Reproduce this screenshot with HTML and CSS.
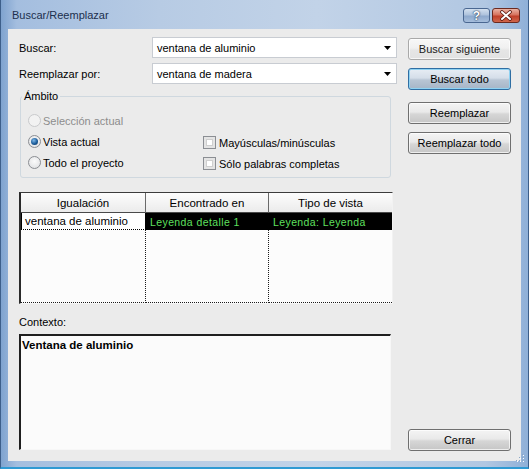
FILE: index.html
```html
<!DOCTYPE html>
<html lang="es">
<head>
<meta charset="utf-8">
<title>Buscar/Reemplazar</title>
<link rel="stylesheet" href="styles.css">
</head>
<body>
<div class="window">
  <div class="titlebar">
    <span class="title">Buscar/Reemplazar</span>
    <div class="tbtns">
      <span class="tbtn help">?</span>
      <span class="tbtn close">
        <svg width="28" height="15" viewBox="0 0 28 15">
          <path d="M10 4 L18 11 M18 4 L10 11" stroke="#5a1a12" stroke-width="3.6" stroke-linecap="round" fill="none"/>
          <path d="M10 4 L18 11 M18 4 L10 11" stroke="#ffffff" stroke-width="2" stroke-linecap="round" fill="none"/>
        </svg>
      </span>
    </div>
  </div>
  <div class="client">
    <div class="main">
      <div class="row">
        <span class="lbl">Buscar:</span>
        <div class="combo"><span class="ctext">ventana de aluminio</span><svg class="arrow" width="7" height="4" viewBox="0 0 7 4"><path d="M0 0 H7 L3.5 4 Z" fill="#000"/></svg></div>
      </div>
      <div class="row row2">
        <span class="lbl">Reemplazar por:</span>
        <div class="combo"><span class="ctext">ventana de madera</span><svg class="arrow" width="7" height="4" viewBox="0 0 7 4"><path d="M0 0 H7 L3.5 4 Z" fill="#000"/></svg></div>
      </div>
      <fieldset class="group">
        <legend>Ámbito</legend>
        <div class="gopts">
          <label class="opt disabled"><span class="radio"></span>Selección actual</label>
          <span class="empty"></span>
          <label class="opt"><span class="radio checked"></span>Vista actual</label>
          <label class="opt chk"><span class="check"></span>Mayúsculas/minúsculas</label>
          <label class="opt"><span class="radio"></span>Todo el proyecto</label>
          <label class="opt chk"><span class="check"></span>Sólo palabras completas</label>
        </div>
      </fieldset>
      <div class="grid">
        <div class="hcell">Igualación</div>
        <div class="hcell">Encontrado en</div>
        <div class="hcell last">Tipo de vista</div>
        <div class="dcell focus">ventana de aluminio</div>
        <div class="dcell sel">Leyenda detalle 1</div>
        <div class="dcell sel last">Leyenda: Leyenda</div>
        <div class="fcell"></div>
        <div class="fcell"></div>
        <div class="fcell last"></div>
      </div>
      <div class="ctxlbl">Contexto:</div>
      <div class="ctx"><b>Ventana de aluminio</b></div>
    </div>
    <div class="side">
      <button class="btn light">Buscar siguiente</button>
      <button class="btn default">Buscar todo</button>
      <button class="btn b3">Reemplazar</button>
      <button class="btn b4">Reemplazar todo</button>
      <button class="btn close-btn">Cerrar</button>
    </div>
  </div>
  <svg class="grip" width="10" height="10" viewBox="0 0 10 10">
    <g fill="#ffffff"><rect x="8" y="2" width="1" height="1"/><rect x="5" y="5" width="1" height="1"/><rect x="8" y="5" width="1" height="1"/><rect x="2" y="8" width="1" height="1"/><rect x="5" y="8" width="1" height="1"/><rect x="8" y="8" width="1" height="1"/></g>
    <g fill="#8aa6c6"><rect x="7" y="1" width="1" height="1"/><rect x="4" y="4" width="1" height="1"/><rect x="7" y="4" width="1" height="1"/><rect x="1" y="7" width="1" height="1"/><rect x="4" y="7" width="1" height="1"/><rect x="7" y="7" width="1" height="1"/></g>
  </svg>
</div>
</body>
</html>
```

FILE: styles.css
```css
* { box-sizing: border-box; }
html, body { margin: 0; padding: 0; }
body {
  width: 529px;
  height: 469px;
  overflow: hidden;
  font-family: "Liberation Sans", Arial, sans-serif;
  font-size: 11px;
  color: #000;
}
.window {
  position: relative;
  width: 529px;
  height: 469px;
  display: flex;
  flex-direction: column;
  background: linear-gradient(to right, #7fa3cf 0%, #a4bedf 3%, #b7cbe4 30%, #c2d3e8 60%, #b1c7e2 92%, #8fb0d8 100%);
  border-left: 1px solid #3d5f8a;
  border-right: 1px solid #3d5f8a;
  border-bottom: 2px solid #2f9ad3;
  padding: 0 7px 6px 7px;
}
.titlebar {
  height: 29px;
  flex: none;
  display: flex;
  align-items: flex-start;
  justify-content: space-between;
}
.title {
  padding: 9px 0 0 4px;
  font-size: 11px;
  line-height: 13px;
  color: #1c2f4d;
}
.tbtns {
  display: flex;
  gap: 2px;
  margin-top: 8px;
  margin-right: 1px;
}
.tbtn {
  display: flex;
  align-items: center;
  justify-content: center;
  height: 15px;
  border-radius: 3px;
}
.help {
  width: 27px;
  border: 1px solid #4a6791;
  background: linear-gradient(#d3e0ef 0%, #aec3dd 45%, #8ea9cd 55%, #a6bedc 100%);
  color: #fff;
  font-weight: bold;
  font-size: 12px;
  text-shadow: 0 0 2px #1e3352, 0 0 1px #1e3352;
}
.close {
  width: 28px;
  border: 1px solid #6b2a20;
  background: linear-gradient(#eab2a4 0%, #d7735e 45%, #c0402a 55%, #d0664c 100%);
}
.close svg { display: block; margin: -1px; }

.client {
  flex: 1;
  display: flex;
  background: #ebebeb;
  padding-left: 11px;
}
.main {
  width: 378px;
  display: flex;
  flex-direction: column;
  padding-top: 8px;
}
.row {
  display: flex;
  align-items: center;
  height: 21px;
}
.row2 { margin-top: 5px; }
.lbl { width: 133px; }
.combo {
  width: 245px;
  height: 21px;
  display: flex;
  align-items: center;
  background: #fff;
  border: 1px solid #c8ccd2;
  padding-left: 4px;
}
.ctext { flex: 1; }
.arrow { margin-right: 5px; }

.group {
  margin: 6px 0 0 1px;
  width: 371px;
  border: 1px solid #cfd8df;
  border-radius: 3px;
  padding: 7px 0 4px 7px;
  min-width: 0;
}
.group legend {
  padding: 0 2px;
  margin-left: -6px;
  line-height: 13px;
}
.gopts {
  display: grid;
  grid-template-columns: 175px 1fr;
  grid-auto-rows: 21px;
}
.opt {
  display: flex;
  align-items: center;
  gap: 2px;
}
.opt.chk { gap: 3px; padding-top: 2px; }
.opt.disabled { color: #8d8d8d; }
.radio {
  width: 13px;
  height: 13px;
  border-radius: 50%;
  border: 1px solid #8b8e93;
  background: radial-gradient(circle at 50% 40%, #fbfbfb 0%, #e2e3e5 80%);
  display: flex;
  align-items: center;
  justify-content: center;
}
.disabled .radio {
  border-color: #c9cacc;
  background: #f2f2f2;
}
.radio.checked::after {
  content: "";
  width: 7px;
  height: 7px;
  border-radius: 50%;
  background: radial-gradient(circle at 40% 35%, #7fb8e8 0%, #1b5c9a 55%, #0b2f59 100%);
}
.check {
  width: 13px;
  height: 13px;
  border: 1px solid #8b8e93;
  background: #fff;
  box-shadow: inset 0 0 0 2px #e4e4e4, inset 0 0 0 3px #cfcfcf;
}

.grid {
  margin-top: 14px;
  width: 374px;
  height: 112px;
  display: grid;
  grid-template-columns: 125px 123px 1fr;
  grid-template-rows: 20px 17px 1fr;
  background: #fcfcfc;
  border-top: 1px solid #3c3c3c;
  border-left: 2px solid #2a2a2a;
  border-right: 1px solid #f2f2f2;
  border-bottom: 1px solid #f6f6f6;
}
.hcell {
  display: flex;
  align-items: center;
  justify-content: center;
  background: linear-gradient(#fdfdfd, #ebebeb);
  border-right: 1px solid #6a6a6a;
  border-bottom: 1px solid #4a4a4a;
  font-size: 11.5px;
}
.hcell.last { border-right: none; }
.dcell {
  display: flex;
  align-items: center;
  padding-left: 3px;
  white-space: nowrap;
  overflow: hidden;
}
.dcell.focus {
  background: #fff;
  border: 1px solid #000;
  border-top: none;
  border-bottom: 1px dotted #000;
  font-size: 11.5px;
}
.dcell.sel {
  background: #000;
  color: #5fe05f;
  letter-spacing: 0.4px;
  font-size: 10.5px;
  padding-left: 4px;
}
.fcell {
  border-right: 1px dotted #1a1a1a;
  border-bottom: 1px dotted #1a1a1a;
}
.fcell.last { border-right: none; }

.ctxlbl {
  margin-top: 12px;
  line-height: 13px;
}
.ctx {
  margin-top: 5px;
  width: 372px;
  height: 116px;
  background: #fbfbfb;
  border-top: 2px solid #1f1f1f;
  border-left: 2px solid #1f1f1f;
  border-right: 1px solid #f7f7f7;
  border-bottom: 1px solid #f7f7f7;
  padding: 3px 1px;
  font-size: 11.5px;
}

.side {
  margin-left: 11px;
  width: 103px;
  display: flex;
  flex-direction: column;
  padding: 9px 0 10px 0;
}
.btn {
  height: 22px;
  width: 103px;
  padding: 0;
  font-family: "Liberation Sans", Arial, sans-serif;
  font-size: 11px;
  color: #000;
  border: 1px solid #6f6f6f;
  border-radius: 3px;
  background: linear-gradient(#f4f4f4 0%, #e9e9e9 45%, #d6d6d6 55%, #c6c6c6 100%);
  box-shadow: inset 0 0 0 1px rgba(255,255,255,0.7);
}
.btn.light {
  border-color: #a9a9a9;
  background: linear-gradient(#f7f7f7 0%, #f0f0f0 45%, #e6e6e6 55%, #e2e2e2 100%);
  color: #1a1a1a;
}
.btn.default {
  margin-top: 8px;
  border-color: #2f6ea3;
  background: linear-gradient(#e7edf4 0%, #d5dee9 45%, #b8c5d4 55%, #a6b5c7 100%);
  box-shadow: inset 0 0 0 1px #8fd2f2;
}
.btn.b3 { margin-top: 12px; }
.btn.b4 { margin-top: 8px; }
.btn.close-btn { margin-top: auto; }

.grip {
  position: absolute;
  right: 3px;
  bottom: 4px;
}
```
